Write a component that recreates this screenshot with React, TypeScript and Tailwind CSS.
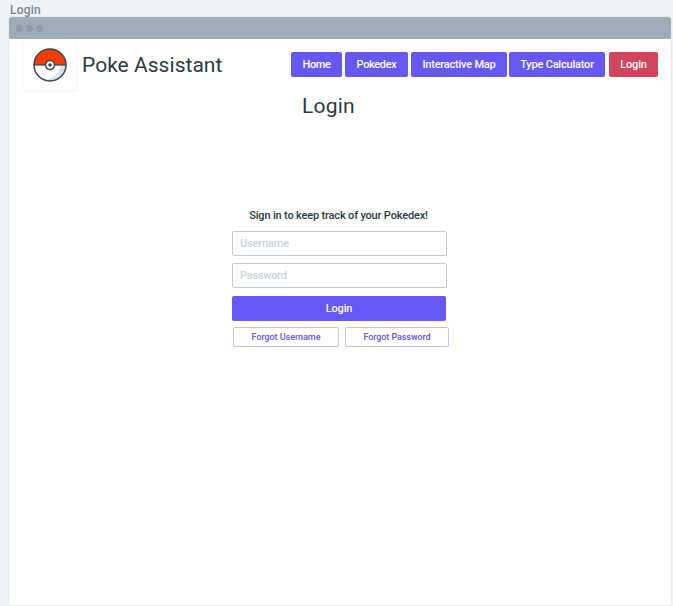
import React from 'react';

const font = 'font-[Roboto,"Liberation_Sans",sans-serif]';

function Pokeball() {
  return (
    <svg className="block h-[34px] w-[34px]" viewBox="0 0 34 34">
      <circle cx="17" cy="17" r="16" fill="#fff" />
      <path d="M1 17a16 16 0 0 1 32 0z" fill="#fa3c05" />
      <path d="M33 17a16 16 0 0 1-21 15.2C21 30 27 25 28 17z" fill="#dbe2ec" />
      <path d="M1 17h32" stroke="#37474f" strokeWidth="1.2" />
      <circle cx="17" cy="17" r="16" fill="none" stroke="#37474f" strokeWidth="1.5" />
      <circle cx="17" cy="17" r="4.4" fill="#fff" stroke="#37474f" strokeWidth="1.5" />
      <circle cx="17" cy="17" r="1.8" fill="#37474f" />
    </svg>
  );
}

const base = 'flex shrink-0 items-center justify-center whitespace-nowrap rounded-[2px] pt-[2px] font-medium';

const nav = [
  { label: 'Home', cls: 'w-[51px] bg-[#6558f5]', text: 'tracking-[-0.4px]' },
  { label: 'Pokedex', cls: 'ml-[3px] w-[63px] bg-[#6558f5]', text: 'tracking-[-0.35px]' },
  { label: 'Interactive Map', cls: 'ml-[3px] w-[96px] bg-[#6558f5]', text: 'tracking-[-0.22px]' },
  { label: 'Type Calculator', cls: 'ml-[2px] w-[96px] bg-[#6558f5]', text: 'tracking-[-0.2px]' },
  { label: 'Login', cls: 'ml-[4px] w-[49px] bg-[#d3455b]', text: 'tracking-[-0.2px]' },
];

const field =
  'mt-[7px] flex h-[25px] items-center rounded-[2px] border border-[#bfccd2] pl-[7px] pt-[2px] text-[11px] font-medium text-[#c9d3da]';

export default function App() {
  return (
    <div className={`h-[606px] w-[673px] overflow-hidden bg-[#eff3f6] pl-[9px] text-[#2b3a42] ${font}`}>
      <div className="h-[17px] pl-[1px] pt-[2px] text-[12px] leading-[16px] font-medium text-[#778692]">
        <span className="tracking-[0.2px]">Login</span>
      </div>
      <main className="h-[588px] w-[662px] rounded-t-[3px] bg-white shadow-[0_0_2px_rgba(0,0,0,0.12)]">
        <div className="flex h-[22px] items-center gap-[3px] rounded-t-[3px] bg-[#9dacb9] pl-[7px]">
          <i className="h-[7px] w-[7px] rounded-full bg-[#8b9ba9]" />
          <i className="h-[7px] w-[7px] rounded-full bg-[#8b9ba9]" />
          <i className="h-[7px] w-[7px] rounded-full bg-[#8b9ba9]" />
        </div>
        <header className="flex h-[51px] items-center pl-[15px]">
          <div className="flex h-[51px] w-[52px] items-center justify-center shadow-[0_1px_3px_rgba(0,0,0,0.07)]">
            <Pokeball />
          </div>
          <h1 className="ml-[6px] w-[209px] whitespace-nowrap text-[21px] leading-[26px]">
            <span className="tracking-[0.03px]">Poke Assistant</span>
          </h1>
          <nav className="flex">
            {nav.map((n) => (
              <button key={n.label} className={`${base} h-[25px] text-[11px] text-white ${n.cls}`}>
                <span className={n.text}>{n.label}</span>
              </button>
            ))}
          </nav>
        </header>
        <h2 className="ml-[293px] mt-[3px] text-[21px] leading-[26px]">
          <span className="tracking-[0.2px]">Login</span>
        </h2>
        <form className="ml-[223px] mt-[89px] w-[215px]">
          <p className="whitespace-nowrap pr-[2px] text-center text-[11px] leading-[16px] font-medium">
            <span className="tracking-[-0.17px]">Sign in to keep track of your Pokedex!</span>
          </p>
          <div className={field}>
            <span className="tracking-[-0.15px]">Username</span>
          </div>
          <div className={field}>
            <span className="tracking-[-0.25px]">Password</span>
          </div>
          <button type="button" className={`${base} mt-[8px] h-[25px] w-[214px] bg-[#6558f5] text-[11px] text-white`}>
            <span className="tracking-[-0.2px]">Login</span>
          </button>
          <div className="ml-px mt-[6px] flex gap-[6px]">
            <button type="button" className={`${base} h-[20px] w-[106px] border border-[#c4bdf8] text-[9px] text-[#6558d5]`}>
              <span className="tracking-[-0.05px]">Forgot Username</span>
            </button>
            <button type="button" className={`${base} h-[20px] w-[104px] border border-[#c4bdf8] text-[9px] text-[#6558d5]`}>
              <span className="tracking-[-0.08px]">Forgot Password</span>
            </button>
          </div>
        </form>
      </main>
    </div>
  );
}
